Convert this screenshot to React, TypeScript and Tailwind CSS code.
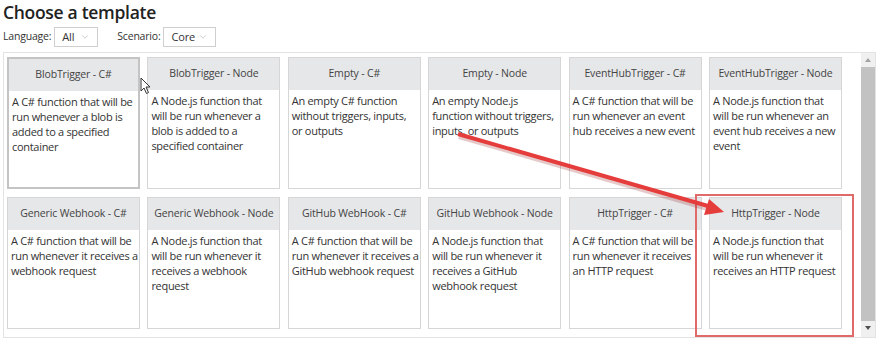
import { ChevronDown } from "lucide-react";

interface ITemplate {
  title: string;
  lines: string[];
}

const templates: ITemplate[] = [
  { title: "BlobTrigger - C#", lines: ["A C# function that will be", "run whenever a blob is", "added to a specified", "container"] },
  { title: "BlobTrigger - Node", lines: ["A Node.js function that", "will be run whenever a", "blob is added to a", "specified container"] },
  { title: "Empty - C#", lines: ["An empty C# function", "without triggers, inputs,", "or outputs"] },
  { title: "Empty - Node", lines: ["An empty Node.js", "function without triggers,", "inputs, or outputs"] },
  { title: "EventHubTrigger - C#", lines: ["A C# function that will be", "run whenever an event", "hub receives a new event"] },
  { title: "EventHubTrigger - Node", lines: ["A Node.js function that", "will be run whenever an", "event hub receives a new", "event"] },
  { title: "Generic Webhook - C#", lines: ["A C# function that will be", "run whenever it receives a", "webhook request"] },
  { title: "Generic Webhook - Node", lines: ["A Node.js function that", "will be run whenever it", "receives a webhook", "request"] },
  { title: "GitHub WebHook - C#", lines: ["A C# function that will be", "run whenever it receives a", "GitHub webhook request"] },
  { title: "GitHub Webhook - Node", lines: ["A Node.js function that", "will be run whenever it", "receives a GitHub", "webhook request"] },
  { title: "HttpTrigger - C#", lines: ["A C# function that will be", "run whenever it receives", "an HTTP request"] },
  { title: "HttpTrigger - Node", lines: ["A Node.js function that", "will be run whenever it", "receives an HTTP request"] },
];

export default function App(): JSX.Element {
  return (
    <div
      className="relative w-[880px] h-[343px] overflow-hidden bg-white text-[#333]"
      style={{ fontFamily: "'Open Sans', 'Noto Sans', sans-serif" }}
    >
      <h1 className="pl-[3px] text-[17.5px] font-semibold leading-[24px] tracking-[-0.3px] text-[#222]">
        Choose a template
      </h1>
      <div className="flex items-center h-[22px] mt-[2px] pl-[3px] text-[10.5px] tracking-[-0.2px] text-[#333]">
        <span>Language:</span>
        <Select value="All" width="w-[44px]" />
        <span className="ml-[19px]">Scenario:</span>
        <Select value="Core" width="w-[53px]" />
      </div>
      <div className="flex ml-[3px] mt-[4px] w-[873px] h-[286px] border border-[#e3e3e3]">
        <div className="flex-1 pl-[3px] pt-[4px] pr-[19px]">
          <div className="grid grid-cols-6 gap-x-[7.4px] gap-y-[8px]">
            {templates.map((item, i) => (
              <TemplateCard key={item.title} item={item} selected={i === 0} />
            ))}
          </div>
        </div>
        <Scrollbar />
      </div>

      {/* annotation overlays */}
      <div className="absolute left-[695px] top-[194px] w-[159px] h-[143px] border-2 border-[#e06a6a]" />
      <svg className="absolute left-0 top-0" width="880" height="343">
        <line x1="459" y1="136" x2="708" y2="208" stroke="#9a2a2a" strokeOpacity="0.25" strokeWidth="6" />
        <line x1="458" y1="134" x2="708" y2="206" stroke="#e53c3c" strokeWidth="4" />
        <polygon points="724,212 704,215 709,199" fill="#e53c3c" />
      </svg>
      <svg className="absolute left-[140px] top-[77px]" width="12" height="18" viewBox="0 0 12 18">
        <path d="M1 1 L1 14 L4 11 L6.5 16.5 L8.5 15.5 L6 10 L10 10 Z" fill="white" stroke="#333" strokeWidth="1" />
      </svg>
    </div>
  );
}

function Select({ value, width }: { value: string; width: string }): JSX.Element {
  return (
    <div
      className={`ml-[3px] ${width} h-[20px] border border-[#cfcfcf] flex items-center justify-between px-[7px] text-[11px]`}
    >
      <span>{value}</span>
      <ChevronDown className="w-[10px] h-[10px] text-[#aaa]" strokeWidth={1.5} />
    </div>
  );
}

function TemplateCard({ item, selected }: { item: ITemplate; selected: boolean }): JSX.Element {
  return (
    <div
      className={`h-[132px] bg-white ${selected ? "border-2 border-[#c4c4c4]" : "border border-[#d6d6d6]"}`}
    >
      <div className="h-[32px] bg-[#e6e7e9] flex items-center justify-center whitespace-nowrap text-[10.5px] tracking-[-0.15px] text-[#444]">
        {item.title}
      </div>
      <p className="px-[3px] pt-[3px] whitespace-nowrap text-[11px] leading-[15px] tracking-[-0.3px] text-[#333]">
        {item.lines.map((line) => (
          <span key={line} className="block">
            {line}
          </span>
        ))}
      </p>
    </div>
  );
}

function Scrollbar(): JSX.Element {
  return (
    <div className="w-[14px] bg-[#f0f0f0] flex flex-col items-center">
      <div className="h-[14px] flex items-center justify-center">
        <div className="w-0 h-0 border-l-[3.5px] border-r-[3.5px] border-b-[4px] border-l-transparent border-r-transparent border-b-[#a3a3a3]" />
      </div>
      <div className="w-full flex-1 bg-[#c2c2c2] mb-[16px]" />
      <div className="h-[14px] flex items-center justify-center -mt-[16px] mb-[2px]">
        <div className="w-0 h-0 border-l-[3.5px] border-r-[3.5px] border-t-[4px] border-l-transparent border-r-transparent border-t-[#505050]" />
      </div>
    </div>
  );
}
